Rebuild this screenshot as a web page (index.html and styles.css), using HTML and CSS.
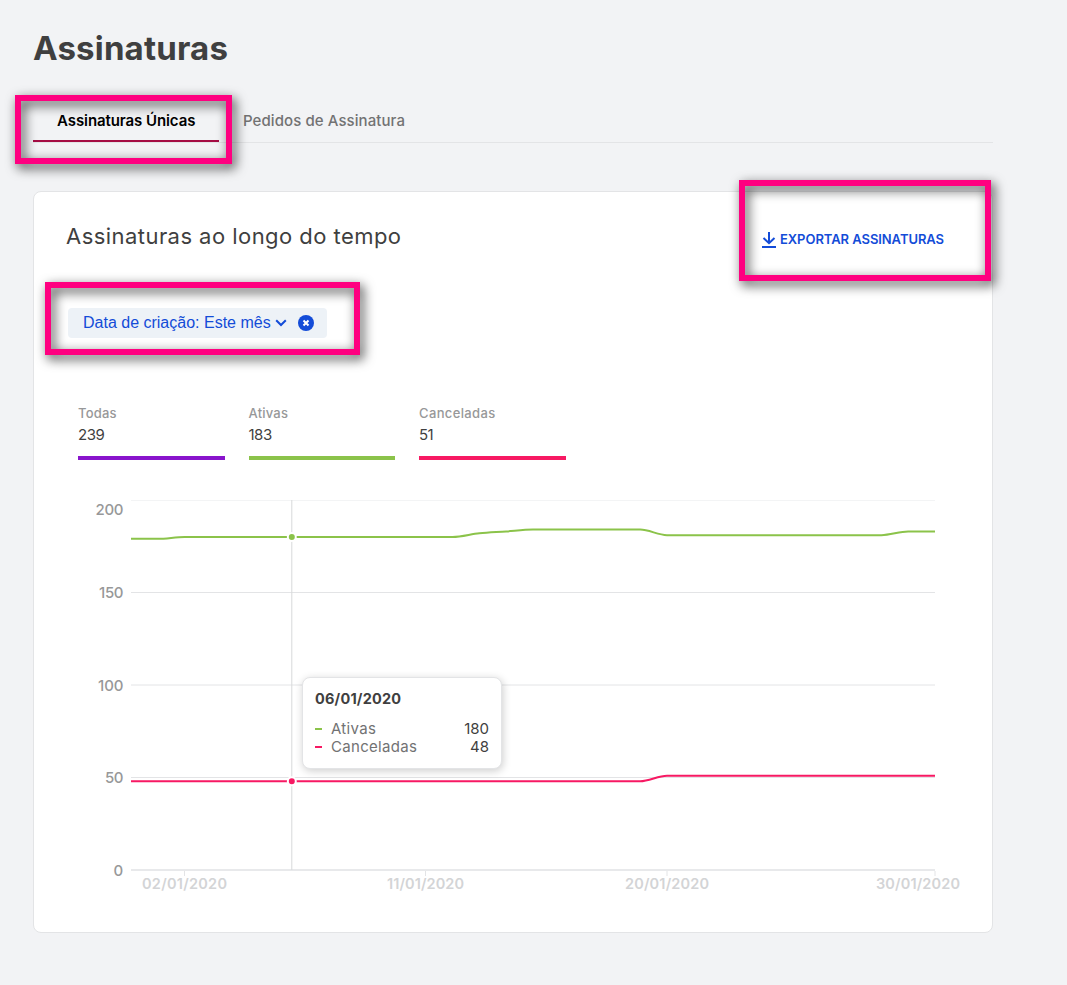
FILE: index.html
```html
<!DOCTYPE html>
<html lang="pt-BR">
<head>
<meta charset="utf-8">
<title>Assinaturas</title>
<link rel="stylesheet" href="styles.css">
</head>
<body>
<main class="page">
  <h1 class="page-title">Assinaturas</h1>
  <nav class="tabs">
    <a class="tab tab-active"><span>Assinaturas Únicas</span></a>
    <a class="tab"><span>Pedidos de Assinatura</span></a>
  </nav>
  <section class="card">
    <header class="card-header">
      <h2 class="card-title">Assinaturas ao longo do tempo</h2>
      <a class="export">
        <svg width="14" height="16" viewBox="0 0 14 16" fill="none" stroke="#134cd8" stroke-width="2"><path d="M7 0v11M1.500 6L7 11.200 12.500 6M0 15h14"/></svg>
        <span>EXPORTAR ASSINATURAS</span>
      </a>
    </header>
    <div class="filter">
      <span class="filter-label">Data de criação: Este mês</span>
      <svg class="chevron" width="12" height="8" viewBox="0 0 12 8" fill="none" stroke="#134cd8" stroke-width="2"><path d="M1.200 1.200L6 6l4.800-4.800"/></svg>
      <svg class="clear" width="16" height="16" viewBox="0 0 16 16"><circle cx="8" cy="8" r="8" fill="#134cd8"/><path d="M5.500 5.500l5 5M10.500 5.500l-5 5" stroke="#fff" stroke-width="2"/></svg>
    </div>
    <div class="stats">
      <div class="stat stat-all"><span class="stat-label">Todas</span><span class="stat-value">239</span></div>
      <div class="stat stat-active"><span class="stat-label">Ativas</span><span class="stat-value">183</span></div>
      <div class="stat stat-cancelled"><span class="stat-label">Canceladas</span><span class="stat-value">51</span></div>
    </div>
    <div class="chart">
      <svg class="plot" width="904" height="410" viewBox="66 490 904 410">
        <g fill="none">
          <path stroke="#f3f4f5" d="M131 500.500H935"/>
          <path stroke="#e3e4e6" d="M131 592.500H935M131 685H935M131 777.500H935"/>
          <path stroke="#e8e9eb" stroke-width="2" d="M131 870H935"/>
          <path stroke="#e3e4e6" d="M184.500 871v5M425.500 871v5M667 871v5M935 871v5"/>
          <path stroke="#d8d9db" d="M291.800 500V870"/>
          <path stroke="#8bc34a" stroke-width="2" d="M131 538.850H157.800C166.700 538.850 175.600 537 184.600 537H452.600C461.500 537 470.500 534.200 479.400 533.300C488.300 532.400 497.300 532.100 506.200 531.450C515.100 530.800 524.100 529.600 533 529.600H640.200C649.100 529.600 658.100 535.150 667 535.150H881.400C890.300 535.150 899.300 531.450 908.200 531.450H935"/>
          <path stroke="#f71963" stroke-width="2" d="M131 781.200H640.200C649.100 781.200 658.100 775.650 667 775.650H935"/>
        </g>
        <g stroke="#fff" stroke-width="2"><circle cx="291.800" cy="537" r="4" fill="#8bc34a"/><circle cx="291.800" cy="781.200" r="4" fill="#f71963"/></g>
        <g class="axis-y">
          <text x="95.500" y="515" textLength="28">200</text>
          <text x="99" y="598" textLength="24.500">150</text>
          <text x="98" y="690.500" textLength="25.500">100</text>
          <text x="105" y="783" textLength="18.500">50</text>
          <text x="113.500" y="876">0</text>
        </g>
        <g class="axis-x">
          <text x="142" y="889" textLength="85">02/01/2020</text>
          <text x="387" y="889" textLength="77">11/01/2020</text>
          <text x="625" y="889" textLength="84">20/01/2020</text>
          <text x="876" y="889" textLength="84">30/01/2020</text>
        </g>
      </svg>
      <div class="tooltip">
        <strong class="tooltip-date">06/01/2020</strong>
        <div class="tooltip-row"><i class="dash dash-green"></i><span class="tip-active">Ativas</span><b>180</b></div>
        <div class="tooltip-row"><i class="dash dash-pink"></i><span class="tip-cancelled">Canceladas</span><b>48</b></div>
      </div>
    </div>
  </section>
</main>
<div class="highlight highlight-tab"></div>
<div class="highlight highlight-export"></div>
<div class="highlight highlight-filter"></div>
</body>
</html>
```
FILE: styles.css
```css
* { box-sizing: border-box; }
body {
  margin: 0;
  height: 985px;
  background: #f2f3f5;
  color: #3f3f40;
  font-family: Inter, "Liberation Sans", sans-serif;
  position: relative;
  overflow: hidden;
}
.page { width: 960px; margin-left: 33px; padding-top: 28px; }
.page-title { margin: 0; font-size: 33px; line-height: 40px; font-weight: 700; letter-spacing: .18px; }
.tabs { display: flex; height: 44px; margin-top: 31px; border-bottom: 1px solid #e3e4e6; }
.tab { height: 43px; padding: 12px 24px 9px; font-size: 15px; line-height: 20px; font-weight: 500; letter-spacing: .08px; color: #727273; white-space: nowrap; }
.tab-active { width: 186px; color: #000; font-weight: 600; letter-spacing: -.08px; border-bottom: 2px solid #a50d44; }
.card { height: 742px; margin-top: 48px; padding: 24px 32px; background: #fff; border: 1px solid #e3e4e6; border-radius: 8px; }
.card-header { display: flex; justify-content: space-between; height: 40px; }
.card-title { margin: 0; font-size: 22px; line-height: 40px; font-weight: 400; letter-spacing: .45px; }
.export { display: flex; align-items: center; gap: 4px; margin-right: 16px; padding-top: 6px; color: #134cd8; font-size: 13px; font-weight: 600; letter-spacing: -.06px; white-space: nowrap; }
.export svg { position: relative; top: 1px; }
.filter { display: flex; align-items: center; width: 259px; height: 30px; margin: 52px 0 0 2px; padding-left: 15px; background: #edf2f7; border-radius: 4px; color: #134cd8; font: 16px/30px "Liberation Sans", Arial, sans-serif; white-space: nowrap; }
.chevron { margin-left: 4px; }
.clear { margin-left: 11px; }
.stats { display: flex; gap: 24px; margin: 64px 0 0 12px; }
.stat { display: flex; flex-direction: column; width: 146.500px; height: 58px; border-bottom: 4px solid; }
.stat-label { font-size: 13px; line-height: 22px; font-weight: 500; letter-spacing: .2px; color: #979899; }
.stat-cancelled .stat-label { letter-spacing: .36px; }
.stat-value { font-size: 15px; line-height: 22px; letter-spacing: -.5px; color: #3f3f40; }
.stat-all { border-color: #8914cc; }
.stat-active { border-color: #8bc34a; }
.stat-cancelled { border-color: #f71963; }
.chart { position: relative; margin-top: 30px; width: 904px; height: 410px; }
.plot { display: block; }
.axis-y { font-size: 15px; font-weight: 500; fill: #979899; }
.axis-x { font-size: 14.500px; font-weight: 600; fill: #d3d4d6; }
.tooltip { position: absolute; left: 236px; top: 187px; width: 200px; height: 92px; padding: 12px; background: #fff; border: 1px solid #e3e4e6; border-radius: 8px; box-shadow: 1px 2px 8px rgba(0, 0, 0, .2); }
.tooltip-date { display: block; height: 30px; font-size: 14.500px; line-height: 18px; letter-spacing: .2px; }
.tooltip-row { display: flex; align-items: center; height: 18px; font-size: 15px; line-height: 18px; letter-spacing: .3px; color: #727273; }
.tooltip-row b { margin-left: auto; font-weight: 400; letter-spacing: 0; color: #3f3f40; }
.dash { width: 7px; height: 2px; margin-right: 9px; }
.dash-green { background: #8bc34a; }
.dash-pink { background: #f71963; }
.highlight { position: absolute; border: 6px solid #ff0080; filter: drop-shadow(3px 4px 6px rgba(0, 0, 0, .8)); }
.highlight-tab { left: 15px; top: 95px; width: 217px; height: 69px; }
.highlight-export { left: 739px; top: 180px; width: 252px; height: 101px; }
.highlight-filter { left: 45px; top: 282px; width: 315px; height: 73px; }
```
